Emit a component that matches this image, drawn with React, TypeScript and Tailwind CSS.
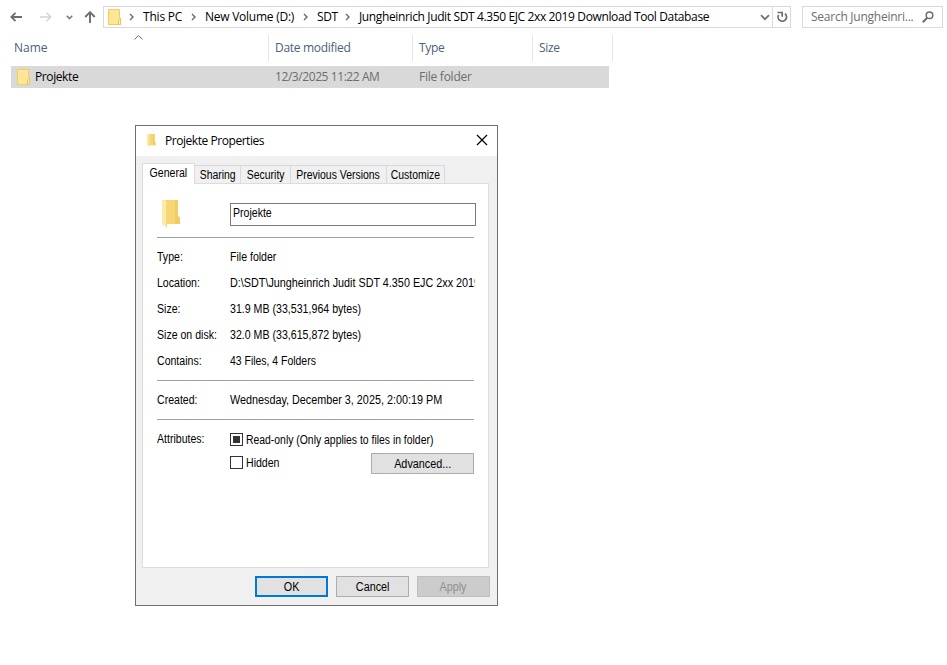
import type { ReactNode } from "react";

const crumbs = [
  { label: "This PC", box: "w-[39px]", text: "tracking-[-0.2px]" },
  { label: "New Volume (D:)", box: "w-[89px]", text: "tracking-[-0.25px]" },
  { label: "SDT", box: "w-[19px]", text: "tracking-[-0.4px]" },
  {
    label: "Jungheinrich Judit SDT 4.350 EJC 2xx 2019 Download Tool Database",
    box: "w-[352px]",
    text: "tracking-[-0.37px]",
  },
];

const columns = [
  { label: "Name", className: "w-[259px] pl-[4px]" },
  { label: "Date modified", className: "w-[144px] pl-[6px] tracking-[-0.3px]" },
  { label: "Type", className: "w-[120px] pl-[6px] tracking-[-0.3px]" },
  { label: "Size", className: "w-[80px] pl-[6px] tracking-[-0.3px]" },
];

const tabs = [
  { label: "Sharing", className: "w-[46px]" },
  { label: "Security", className: "w-[50px]" },
  { label: "Previous Versions", className: "w-[96px]" },
  { label: "Customize", className: "w-[58px]" },
];

const details = [
  { label: "Type:", value: "File folder", text: "scale-x-[0.88]" },
  {
    label: "Location:",
    value: "D:\\SDT\\Jungheinrich Judit SDT 4.350 EJC 2xx 2019 Download Tool Database",
    text: "scale-x-[0.9]",
  },
  { label: "Size:", value: "31.9 MB (33,531,964 bytes)", text: "scale-x-[0.885]" },
  { label: "Size on disk:", value: "32.0 MB (33,615,872 bytes)", text: "scale-x-[0.885]" },
  { label: "Contains:", value: "43 Files, 4 Folders", text: "scale-x-[0.87]" },
];

const SmallFolder = () => (
  <svg width="13" height="17" viewBox="0 0 13 17" className="shrink-0">
    <path d="M.5.5h11v8l1 1v6H.5z" fill="#ffe596" stroke="#f2cd5c" />
    <path d="M10.500 15.500v-4.500l2-1.700v6.200z" fill="#fff0b8" stroke="#e9bd45" strokeWidth=".8" />
  </svg>
);

const OpenFolder = ({ className }: { className: string }) => (
  <svg viewBox="0 0 19 28" preserveAspectRatio="none" className={className}>
    <path d="M3 0h13v16l2 2v6H3z" fill="#f7d673" />
    <path d="M13 0h3v16l2 2v6h-5z" fill="#f1cc63" />
    <path d="M0 0h3l2 4v24l-5-4z" fill="#ffe9a6" />
    <path d="M4.500 4v23" stroke="#f0d17a" strokeWidth=".8" />
  </svg>
);

const CrumbArrow = () => (
  <svg width="5" height="8" viewBox="0 0 5 8" fill="none" className="shrink-0">
    <path d="M1 1l3 3-3 3" stroke="#6b6b6b" strokeWidth="1.4" />
  </svg>
);

// narrow dialog lettering, squeezed towards its left edge
const Narrow = ({ children, className = "scale-x-[0.88]" }: { children: ReactNode; className?: string }) => (
  <span className={`inline-block origin-left whitespace-nowrap ${className}`}>{children}</span>
);

const Button = ({ children, className }: { children: ReactNode; className: string }) => (
  <button
    className={`flex h-[21px] items-center justify-center pt-[2px] text-[12px] leading-[15px] ${className}`}
  >
    <span className="scale-x-[0.9]">{children}</span>
  </button>
);

const AddressBar = () => (
  <div className="flex h-[22px] w-[688px] border border-[#d9d9d9]">
    <div className="flex flex-1 items-center pl-[4px]">
      <SmallFolder />
      <div className="flex items-center pl-[8px]">
        {crumbs.map((crumb) => (
          <div key={crumb.label} className="flex items-center">
            <CrumbArrow />
            <span className={`mx-[9px] whitespace-nowrap ${crumb.box} ${crumb.text}`}>
              {crumb.label}
            </span>
          </div>
        ))}
      </div>
    </div>
    <div className="flex w-[12px] items-center">
      <svg width="10" height="7" viewBox="0 0 10 7" fill="none">
        <path d="M1 1.200l4 4 4-4" stroke="#707070" strokeWidth="1.700" />
      </svg>
    </div>
    <div className="flex w-[18px] items-center justify-center border-l border-[#d9d9d9]">
      <svg width="12" height="12" viewBox="0 0 12 12" fill="none">
        <path d="M9 2.800A4.200 4.200 0 1 1 2.600 4" stroke="#6d6d6d" strokeWidth="1.800" />
        <path d="M1.500 1.500h4.700v4.300" stroke="#6d6d6d" strokeWidth="1.700" />
      </svg>
    </div>
  </div>
);

const Toolbar = () => (
  <div className="flex h-[28px] items-start pl-[10px] pt-[6px]">
    <div className="flex h-[22px] w-[93px] items-center">
      <svg width="12" height="10" viewBox="0 0 12 10" fill="none">
        <path d="M5.500.8L1.300 5l4.200 4.200M1.300 5H12" stroke="#6d6d6d" strokeWidth="1.800" />
      </svg>
      <svg width="12" height="10" viewBox="0 0 12 10" fill="none" className="ml-[18px]">
        <path d="M6.500.8L10.700 5 6.500 9.200M10.700 5H0" stroke="#d4d4d4" strokeWidth="1.500" />
      </svg>
      <svg width="7" height="5" viewBox="0 0 7 5" fill="none" className="ml-[14px]">
        <path d="M.7.8l2.800 2.800L6.300.8" stroke="#7a7a7a" strokeWidth="1.500" />
      </svg>
      <svg width="12" height="12" viewBox="0 0 12 12" fill="none" className="ml-[11px]">
        <path d="M1.200 6L6 1.200 10.800 6M6 1.200V12" stroke="#6d6d6d" strokeWidth="1.900" />
      </svg>
    </div>
    <AddressBar />
    <div className="ml-[11px] flex h-[22px] w-[141px] items-center border border-[#d9d9d9] pl-[8px] text-[#6d6d6d]">
      <span className="w-[111px] whitespace-nowrap tracking-[-0.25px]">Search Jungheinri...</span>
      <svg width="12" height="12" viewBox="0 0 12 12" fill="none">
        <circle cx="7.500" cy="4.300" r="3.300" stroke="#6d6d6d" strokeWidth="1.500" />
        <path d="M5.200 6.800L.8 11.200" stroke="#6d6d6d" strokeWidth="2" />
      </svg>
    </div>
  </div>
);

const FileList = () => (
  <div className="pl-[11px]">
    <div className="relative mt-[7px] -ml-px flex h-[26px] text-[#4c607a]">
      {columns.map((column) => (
        <div
          key={column.label}
          className={`flex items-center border-r border-[#e5e5e5] ${column.className}`}
        >
          {column.label}
        </div>
      ))}
      <svg width="9" height="5" viewBox="0 0 9 5" fill="none" className="absolute left-[124px] top-0">
        <path d="M.5 4.500l4-4 4 4" stroke="#6d6d6d" />
      </svg>
    </div>
    <div className="mt-[5px] flex h-[22px] w-[598px] items-center bg-[#d9d9d9] pl-[6px] text-[#6d6d6d]">
      <SmallFolder />
      <span className="w-[245px] pl-[5px] tracking-[-0.4px] text-black">Projekte</span>
      <span className="w-[144px] tracking-[-0.42px]">12/3/2025 11:22 AM</span>
      <span className="tracking-[-0.25px]">File folder</span>
    </div>
  </div>
);

const Tabs = () => (
  <div className="flex h-[21px] items-end">
    <div className="relative z-10 -mb-px flex h-[21px] w-[53px] justify-center border border-b-0 border-[#dcdcdc] bg-white pt-[2px]">
      <span className="scale-x-[0.88]">General</span>
    </div>
    {tabs.map((tab) => (
      <div
        key={tab.label}
        className={`flex h-[18px] justify-center whitespace-nowrap border-r border-t border-[#d9d9d9] pt-[2px] ${tab.className}`}
      >
        <span className="scale-x-[0.87]">{tab.label}</span>
      </div>
    ))}
  </div>
);

const PropertiesDialog = () => (
  <div className="ml-[135px] mt-[37px] flex h-[481px] w-[363px] flex-col border border-[#6f6f6f] bg-[#f0f0f0] font-['Liberation_Sans',Arial,sans-serif] text-[12px] leading-[15px] text-black">
    <div className="flex h-[30px] shrink-0 items-center bg-white pl-[11px] pr-[9px]">
      <OpenFolder className="mb-[2px] h-[13px] w-[9px]" />
      <span className="flex-1 pb-[2px] pl-[9px] font-['Open_Sans','Noto_Sans',sans-serif] tracking-[-0.45px]">
        Projekte Properties
      </span>
      <svg width="12" height="12" viewBox="0 0 12 12" fill="none" className="mb-[2px]">
        <path d="M1 1l10 10M11 1L1 11" stroke="#000" strokeWidth="1.200" />
      </svg>
    </div>
    <div className="px-[6px] pt-[6px]">
      <Tabs />
      <div className="h-[385px] w-[347px] border border-[#dcdcdc] bg-white pl-[14px] pr-[13px] pt-[15px]">
        <div className="flex h-[38px] items-start">
          <OpenFolder className="ml-[5px] mt-[1px] h-[28px] w-[19px] shrink-0" />
          <div className="ml-[49px] mt-[4px] h-[23px] w-[246px] shrink-0 border border-[#7a7a7a] pl-[2px] pt-[2px]">
            <Narrow>Projekte</Narrow>
          </div>
        </div>
        <div className="w-[317px] border-t border-[#a0a0a0]" />
        <div className="pt-[6px]">
          {details.map((row) => (
            <div key={row.label} className="flex h-[26px] items-center">
              <div className="w-[73px] shrink-0">
                <Narrow>{row.label}</Narrow>
              </div>
              <div className="w-[246px] overflow-hidden">
                <Narrow className={row.text}>{row.value}</Narrow>
              </div>
            </div>
          ))}
        </div>
        <div className="mt-[6px] flex h-[40px] w-[317px] items-center border-y border-[#a0a0a0]">
          <div className="w-[73px] shrink-0">
            <Narrow>Created:</Narrow>
          </div>
          <Narrow className="scale-x-[0.9]">Wednesday, December 3, 2025, 2:00:19 PM</Narrow>
        </div>
        <div className="flex pt-[12px]">
          <div className="w-[73px] shrink-0">
            <Narrow>Attributes:</Narrow>
          </div>
          <div className="w-[244px]">
            <div className="flex h-[17px] items-center">
              <span className="mb-[2px] mr-[3px] flex h-[13px] w-[13px] items-center justify-center border border-[#333]">
                <span className="h-[7px] w-[7px] bg-[#333]" />
              </span>
              <Narrow className="scale-x-[0.867]">Read-only (Only applies to files in folder)</Narrow>
            </div>
            <div className="flex h-[28px] items-center">
              <span className="mb-[2px] mr-[3px] h-[13px] w-[13px] border border-[#333]" />
              <div className="flex-1">
                <Narrow>Hidden</Narrow>
              </div>
              <Button className="w-[103px] border border-[#adadad] bg-[#e1e1e1]">Advanced...</Button>
            </div>
          </div>
        </div>
      </div>
      <div className="-ml-px mr-px flex justify-end gap-[8px] pt-[8px]">
        <Button className="w-[73px] border-2 border-[#0078d7] bg-[#e1e1e1]">OK</Button>
        <Button className="w-[73px] border border-[#adadad] bg-[#e1e1e1]">Cancel</Button>
        <Button className="w-[73px] border border-[#bfbfbf] bg-[#cccccc] text-[#909090]">Apply</Button>
      </div>
    </div>
  </div>
);

const App = () => {
  return (
    <div className="h-[665px] w-[947px] overflow-hidden bg-white font-['Open_Sans','Noto_Sans',sans-serif] text-[12px] leading-[16px] text-black">
      <Toolbar />
      <FileList />
      <PropertiesDialog />
    </div>
  );
};

export default App;
